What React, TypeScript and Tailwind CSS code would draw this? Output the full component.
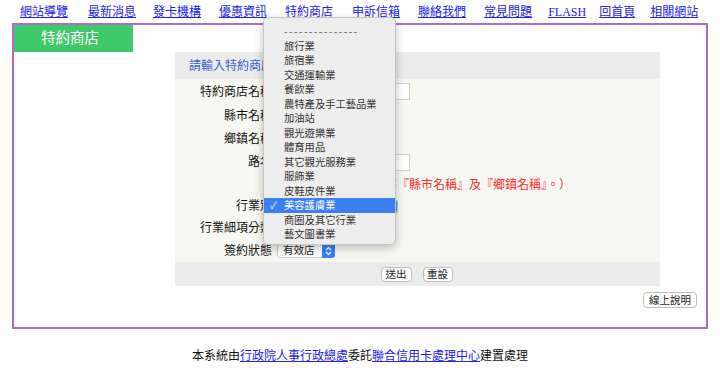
import React from "react";

const SERIF = "font-['Liberation_Serif','Noto_Sans_CJK_TC',serif]";
const SANS = "font-['Noto_Sans_CJK_TC','Liberation_Sans',sans-serif]";

const NAV = [
  { t: "網站導覽", ml: "ml-[20px]" },
  { t: "最新消息", ml: "ml-[20px]" },
  { t: "發卡機構", ml: "ml-[17px]" },
  { t: "優惠資訊", ml: "ml-[18px]" },
  { t: "特約商店", ml: "ml-[18px]" },
  { t: "申訴信箱", ml: "ml-[19px]" },
  { t: "聯絡我們", ml: "ml-[18px]" },
  { t: "常見問題", ml: "ml-[18px]" },
  { t: "FLASH", ml: "ml-[16px]" },
  { t: "回首頁", ml: "ml-[13px]" },
  { t: "相關網站", ml: "ml-[15px]" },
];

const OPTIONS = [
  "---------------",
  "旅行業",
  "旅宿業",
  "交通運輸業",
  "餐飲業",
  "農特產及手工藝品業",
  "加油站",
  "觀光遊樂業",
  "體育用品",
  "其它觀光服務業",
  "服飾業",
  "皮鞋皮件業",
  "美容護膚業",
  "商圈及其它行業",
  "藝文圖書業",
];

function UpDown() {
  return (
    <svg width="7" height="10" viewBox="0 0 7 10" fill="none" stroke="white" strokeWidth="1.2">
      <path d="M1 4 L3.5 1.5 L6 4" />
      <path d="M1 6 L3.5 8.5 L6 6" />
    </svg>
  );
}

function Row({ label, h, children }: { label: string; h: string; children?: React.ReactNode }) {
  return (
    <div className={`grid grid-cols-[97px_1fr] gap-[5px] items-center ${h}`}>
      <span className="text-right text-[12px] text-[#111] leading-none">{label}</span>
      <div className="flex items-center">{children}</div>
    </div>
  );
}

export default function App() {
  return (
    <div className={`relative w-[720px] h-[370px] bg-white ${SERIF}`}>
      {/* Top nav */}
      <nav className="flex h-[23px] items-start pt-[5px] text-[12px] leading-[14px]">
        {NAV.map((n) => (
          <a key={n.t} href="#" className={`${n.ml} text-[#2222ee] underline`}>
            {n.t}
          </a>
        ))}
      </nav>

      {/* Main box */}
      <div className="ml-[12px] w-[696px] h-[306px] border-2 border-[#b36ac3]">
        <div className="w-[119px] h-[27px] bg-[#3fc96a] text-white text-[14.5px] flex items-center pl-[27px]">
          特約商店
        </div>

        <div className="ml-[161px] w-[485px]">
          <div className="h-[27px] bg-[#ebebeb] flex items-center pl-[14px] text-[12px] text-[#3a5fd0]">
            請輸入特約商店查詢條件
          </div>
          <div className="bg-[#f8f8f3] h-[183px] flex flex-col">
            <Row label="特約商店名稱" h="h-[25px]">
              <div className="w-[133px] h-[17px] bg-white border border-[#cfcfcf]" />
            </Row>
            <Row label="縣市名稱" h="h-[23px]">
              <div className="w-[100px] h-[15px] bg-white border border-[#cfcfcf] rounded-[3px]" />
            </Row>
            <Row label="鄉鎮名稱" h="h-[23px]">
              <div className="w-[100px] h-[15px] bg-white border border-[#cfcfcf] rounded-[3px]" />
            </Row>
            <Row label="路名" h="h-[24px]">
              <div className="w-[133px] h-[17px] bg-white border border-[#cfcfcf]" />
            </Row>
            <Row label="" h="h-[22px]">
              <span className="text-[12px] text-[#ff2a2a] whitespace-nowrap leading-none">
                （如查詢路名請先選擇『縣市名稱』及『鄉鎮名稱』。）
              </span>
            </Row>
            <Row label="行業別" h="h-[20px]">
              <div className="w-[121px] h-[15px] bg-white border border-[#cfcfcf] rounded-[3px] flex justify-end">
                <div className="w-[13px] h-full bg-[#3b82f6] rounded-r-[3px]" />
              </div>
            </Row>
            <Row label="行業細項分類" h="h-[23px]">
              <div className="w-[110px] h-[15px] bg-white border border-[#cfcfcf] rounded-[3px]" />
            </Row>
            <Row label="簽約狀態" h="h-[23px]">
              <div className={`w-[58px] h-[15px] bg-white border border-[#c8c8c8] rounded-[3px] flex items-center justify-between ${SANS}`}>
                <span className="pl-[5px] text-[10.5px] text-[#222] leading-none">有效店</span>
                <span className="w-[13px] h-[15px] -mr-px bg-[#3b82f6] rounded-r-[3px] flex items-center justify-center">
                  <UpDown />
                </span>
              </div>
            </Row>
          </div>
          <div className={`h-[24px] bg-[#ebebeb] flex items-center justify-center gap-[11px] pr-[2px] ${SANS}`}>
            <button className="w-[31px] h-[15px] bg-white border border-[#bdbdbd] rounded-[4px] text-[10.5px] leading-none text-[#222]">
              送出
            </button>
            <button className="w-[30px] h-[15px] bg-white border border-[#bdbdbd] rounded-[4px] text-[10.5px] leading-none text-[#222]">
              重設
            </button>
          </div>
        </div>

        <div className="flex justify-end pr-[9px] pt-[6px]">
          <button className={`w-[54px] h-[16px] bg-white border border-[#bdbdbd] rounded-[4px] text-[10.5px] leading-none text-[#222] ${SANS}`}>
            線上說明
          </button>
        </div>
      </div>

      {/* Footer */}
      <p className="mt-[20px] text-center text-[12px] leading-[14px] text-[#111]">
        本系統由
        <a href="#" className="text-[#2222ee] underline">行政院人事行政總處</a>
        委託
        <a href="#" className="text-[#2222ee] underline">聯合信用卡處理中心</a>
        建置處理
      </p>

      {/* Open select popup */}
      <div
        className={`absolute left-[263px] top-[17px] w-[133px] h-[228px] bg-[#ededed] border border-[#c6c6c6] rounded-[5px] shadow-[0_3px_10px_rgba(0,0,0,0.25)] pt-[6px] ${SANS}`}
      >
        {OPTIONS.map((o, i) => {
          const sel = o === "美容護膚業";
          return (
            <div
              key={i}
              className={`relative h-[14.5px] flex items-center pl-[20px] text-[10.3px] leading-none ${
                sel ? "bg-[#3b80f3] text-white" : "text-[#333]"
              }`}
            >
              {sel && <span className="absolute left-[6px] text-[10px]">✓</span>}
              <span className={i === 0 ? "tracking-[1.4px] text-[#555]" : ""}>{o}</span>
            </div>
          );
        })}
      </div>
    </div>
  );
}
